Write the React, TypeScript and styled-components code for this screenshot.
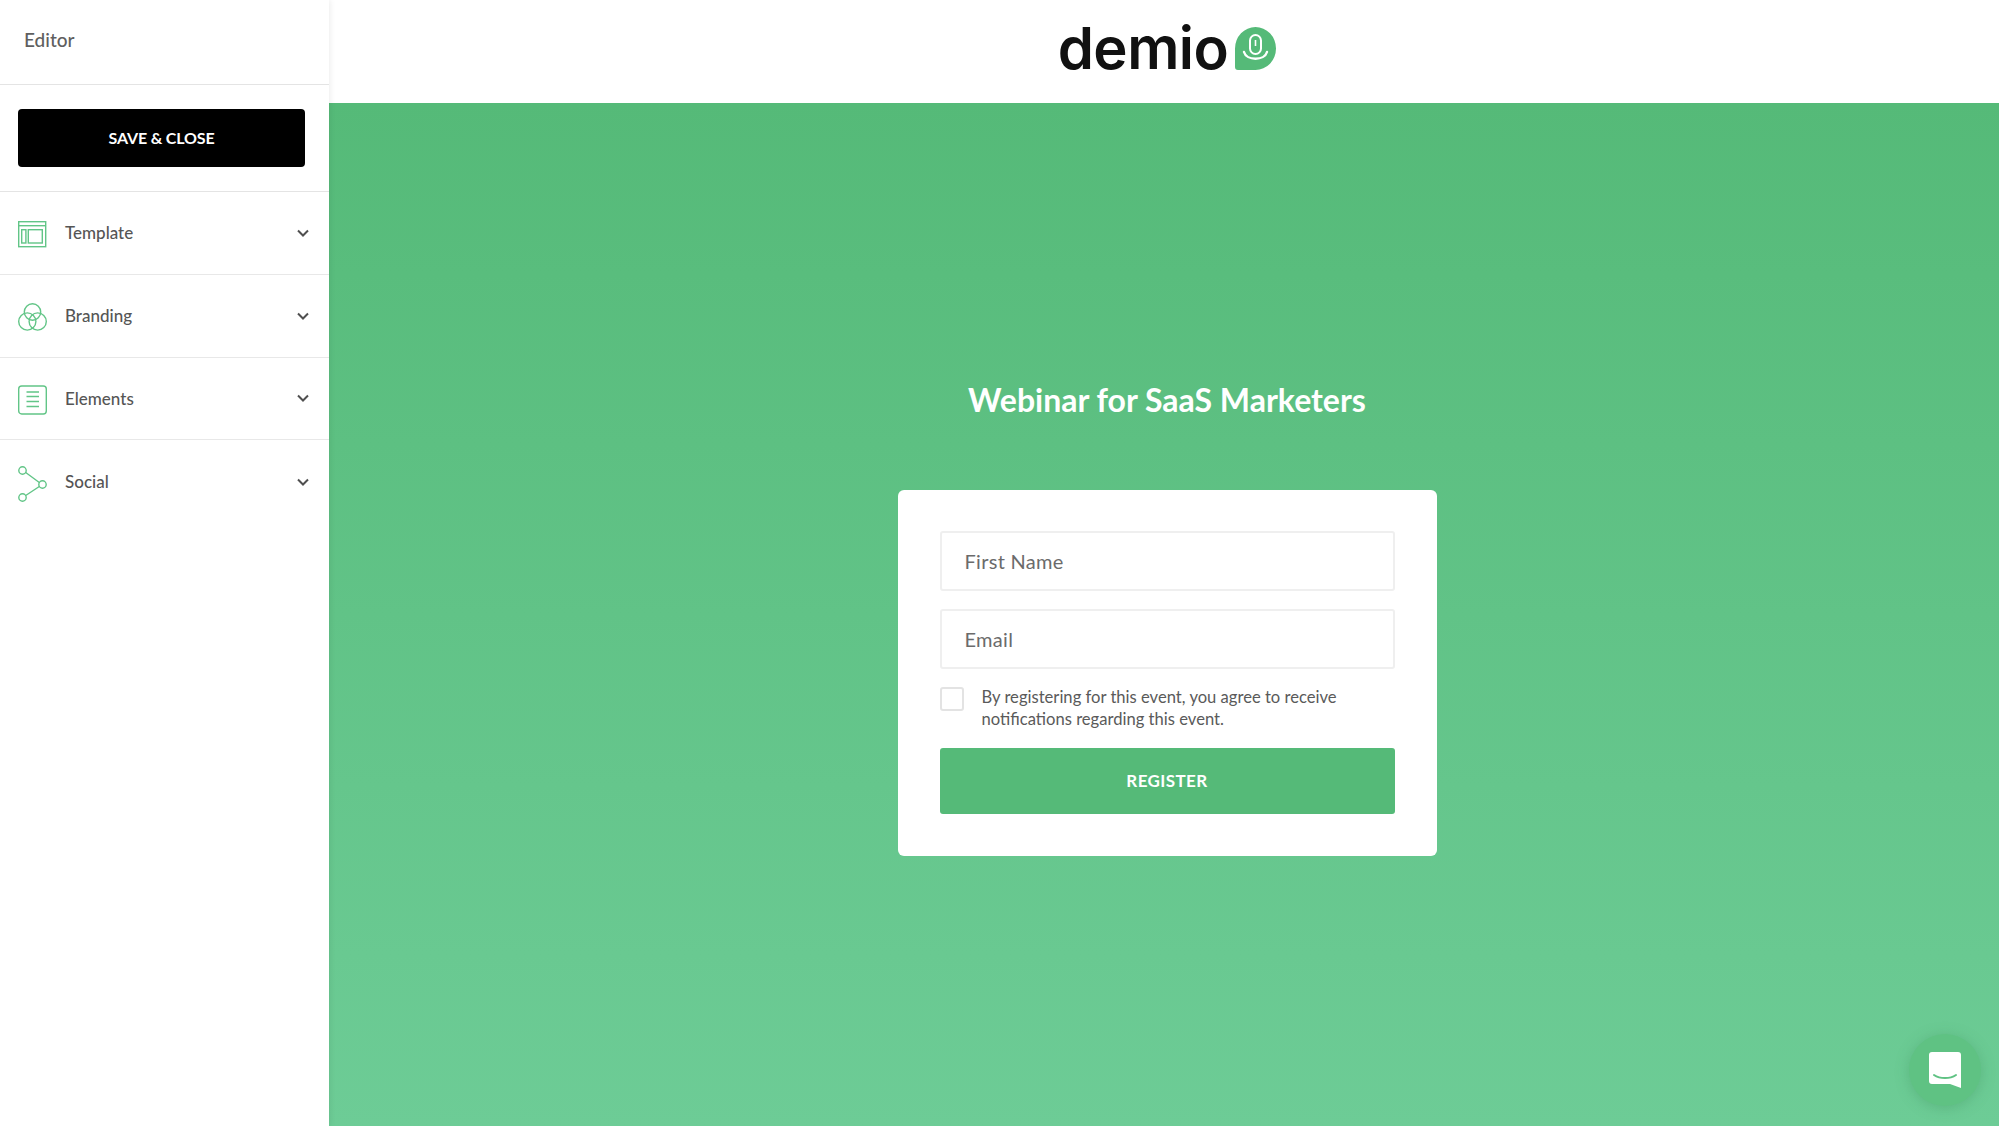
import React from "react";
import styled, { createGlobalStyle } from "styled-components";

const Global = createGlobalStyle`
  html, body { margin: 0; padding: 0; height: 100%; }
  body { font-family: Lato, "Liberation Sans", sans-serif; background: #fff; overflow: hidden; }
  * { box-sizing: border-box; }
`;

const Page = styled.div`
  position: relative;
  display: flex;
  width: 1999px;
  height: 1126px;
  overflow: hidden;
`;

const Sidebar = styled.aside`
  position: relative;
  z-index: 1;
  flex: 0 0 329px;
  display: flex;
  flex-direction: column;
  background: #fff;
  box-shadow: 1px 0 6px rgba(0, 0, 0, 0.08);
`;

const SideTitle = styled.div`
  height: 85px;
  padding: 0 24px 5px;
  display: flex;
  align-items: center;
  font-size: 19px;
  font-weight: 500;
  color: #5f5f5f;
  border-bottom: 1px solid #e4e4e4;
`;

const SaveWrap = styled.div`
  height: 107px;
  padding: 24px 24px 0 18px;
  border-bottom: 1px solid #e4e4e4;
`;

const SaveButton = styled.button`
  display: block;
  width: 287px;
  height: 58px;
  padding: 0 0 2px;
  border: 0;
  border-radius: 4px;
  background: #000;
  color: #fff;
  font: 700 16px Lato, sans-serif;
  letter-spacing: -0.15px;
`;

const Row = styled.div`
  height: 82.8px;
  padding: 0 20px 0 18px;
  display: flex;
  align-items: center;
  border-bottom: 1px solid #e8e8e8;
  &:last-child { border-bottom: 0; }
`;

const RowIcon = styled.svg`
  flex: 0 0 30px;
  width: 30px;
  height: 40px;
  margin: 3px 17px 0 0;
  fill: none;
  stroke: #62c587;
  stroke-width: 1.4;
`;

const RowLabel = styled.span`
  flex: 1;
  font-size: 17px;
  font-weight: 500;
  color: #555;
`;

const Chevron = styled.svg`
  width: 12px;
  height: 8px;
  fill: none;
  stroke: #4f4f4f;
  stroke-width: 2;
`;

const Main = styled.main`
  flex: 1;
  display: flex;
  flex-direction: column;
`;

const TopBar = styled.header`
  height: 103px;
  display: flex;
  align-items: flex-start;
  justify-content: center;
  padding: 27px 0 0 6px;
  gap: 7px;
  background: #fff;
`;

const LogoText = styled.span`
  font-family: Inter, "DejaVu Sans", sans-serif;
  font-weight: 600;
  font-size: 58px;
  line-height: 43px;
  letter-spacing: -0.5px;
  color: #111;
`;

const LogoMark = styled.svg`
  width: 41px;
  height: 43px;
`;

const Stage = styled.section`
  flex: 1;
  display: flex;
  flex-direction: column;
  align-items: center;
  padding: 276px 0 0 6px;
  background: linear-gradient(180deg, #55ba78 0%, #6dcc96 100%);
`;

const Heading = styled.h1`
  margin: 0 0 69px;
  font-size: 32px;
  line-height: 42px;
  font-weight: 700;
  color: #fff;
`;

const Card = styled.form`
  width: 539px;
  height: 366px;
  padding: 41px 42px 0;
  display: flex;
  flex-direction: column;
  background: #fff;
  border-radius: 6px;
`;

const Field = styled.div<{ $h: number }>`
  height: ${(p) => p.$h}px;
  margin-bottom: 18px;
  padding: 0 23px;
  display: flex;
  align-items: center;
  border: 2px solid #efefef;
  border-radius: 3px;
  font-size: 20px;
  font-weight: 400;
  letter-spacing: 0.3px;
  color: #6b6b6b;
`;

const Consent = styled.div`
  display: flex;
  gap: 18px;
  height: 61px;
`;

const Check = styled.span`
  flex: 0 0 24px;
  height: 24px;
  border: 2px solid #e3e3e3;
  border-radius: 3px;
`;

const ConsentText = styled.p`
  margin: 0;
  font-size: 16.6px;
  line-height: 21.5px;
  color: #5a5a5a;
`;

const Register = styled.button`
  height: 66px;
  padding: 0 0 2px;
  border: 0;
  border-radius: 3px;
  background: #55ba78;
  color: #fff;
  font: 700 17px Lato, sans-serif;
  letter-spacing: 0.4px;
`;

const ChatBubble = styled.div`
  position: absolute;
  right: 18px;
  bottom: 20px;
  width: 72px;
  height: 72px;
  display: flex;
  align-items: center;
  justify-content: center;
  border-radius: 50%;
  background: #5fc283;
  box-shadow: 0 2px 14px rgba(60, 140, 90, 0.35);
`;

const ChatIcon = styled.svg`
  width: 34px;
  height: 38px;
`;

const icons: Record<string, React.ReactNode> = {
  Template: (
    <>
      <rect x="0.7" y="7.7" width="27" height="25" />
      <path d="M0.7 11.7h27" />
      <rect x="3.7" y="15.7" width="4.2" height="13.3" />
      <rect x="10.3" y="15.7" width="14" height="13.3" />
    </>
  ),
  Branding: (
    <>
      <circle cx="14.5" cy="15" r="8.2" />
      <circle cx="9.3" cy="24.5" r="8.6" />
      <circle cx="19.7" cy="24.5" r="8.6" />
    </>
  ),
  Elements: (
    <>
      <rect x="0.7" y="6" width="27.6" height="28" rx="3" />
      <path d="M8.5 12h12.5M8.5 16.5h12.5M8.5 21.5h12.5M8.5 26.5h12.5" />
    </>
  ),
  Social: (
    <>
      <circle cx="4.5" cy="7.5" r="3.7" />
      <circle cx="4.5" cy="34.5" r="3.7" />
      <circle cx="24.5" cy="21.5" r="3.7" />
      <path d="M7.7 9.5l13.6 10M21.3 23.5L7.7 32.5" />
    </>
  ),
};

const rows = ["Template", "Branding", "Elements", "Social"];

export default function App() {
  return (
    <Page>
      <Global />
      <Sidebar>
        <SideTitle>Editor</SideTitle>
        <SaveWrap>
          <SaveButton type="button">SAVE &amp; CLOSE</SaveButton>
        </SaveWrap>
        {rows.map((r) => (
          <Row key={r}>
            <RowIcon viewBox="0 0 30 40">{icons[r]}</RowIcon>
            <RowLabel>{r}</RowLabel>
            <Chevron viewBox="0 0 12 8">
              <path d="M1 1.5l5 5 5-5" />
            </Chevron>
          </Row>
        ))}
      </Sidebar>
      <Main>
        <TopBar>
          <LogoText>demio</LogoText>
          <LogoMark viewBox="0 0 41 43">
            <path d="M20.5 0a20.5 21.5 0 0 1 0 43H3a3 3 0 0 1-3-3V21.5A20.5 21.5 0 0 1 20.5 0z" fill="#55ba78" />
            <rect x="15" y="8" width="11" height="19" rx="5.5" fill="none" stroke="#fff" strokeWidth="2" />
            <path d="M20.5 13v6" stroke="#fff" strokeWidth="1.6" />
            <path d="M9 25c2.5 9 20.5 9 23 0" fill="none" stroke="#fff" strokeWidth="2.4" strokeLinecap="round" />
          </LogoMark>
        </TopBar>
        <Stage>
          <Heading>Webinar for SaaS Marketers</Heading>
          <Card>
            <Field $h={60}>First Name</Field>
            <Field $h={60}>Email</Field>
            <Consent>
              <Check />
              <ConsentText>
                By registering for this event, you agree to receive
                <br />
                notifications regarding this event.
              </ConsentText>
            </Consent>
            <Register type="button">REGISTER</Register>
          </Card>
        </Stage>
      </Main>
      <ChatBubble>
        <ChatIcon viewBox="0 0 34 38">
          <path d="M4 1h26a3 3 0 0 1 3 3v33l-11-4H4a3 3 0 0 1-3-3V4a3 3 0 0 1 3-3z" fill="#fff" />
          <path d="M6 24c6 4 16 4 22 0" fill="none" stroke="#5fc283" strokeWidth="2" strokeLinecap="round" />
        </ChatIcon>
      </ChatBubble>
    </Page>
  );
}
